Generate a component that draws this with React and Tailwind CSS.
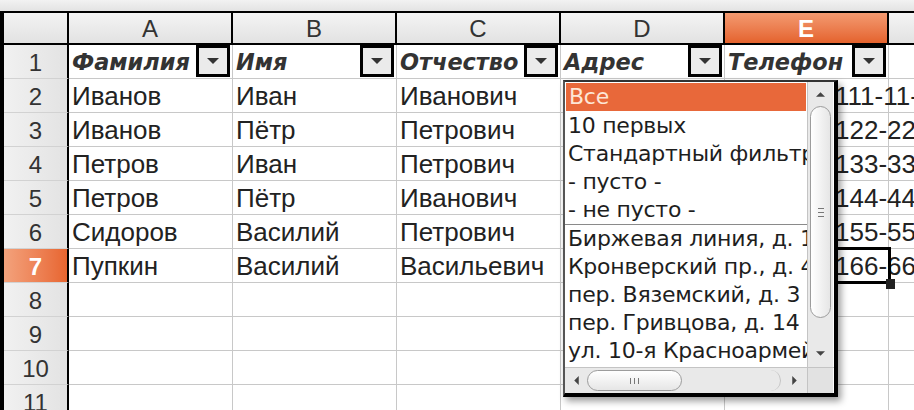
import React from 'react';

const sans = { fontFamily: "'Liberation Sans', Arial, sans-serif" };
const deja = { fontFamily: "'DejaVu Sans', Verdana, sans-serif" };

const columns = ['A', 'B', 'C', 'D', 'E'];
const titles = ['Фамилия', 'Имя', 'Отчество', 'Адрес', 'Телефон'];

const data = [
  ['Иванов', 'Иван', 'Иванович', 'Биржевая линия, д. 1', '111-11-11'],
  ['Иванов', 'Пётр', 'Петрович', 'Кронверский пр., д. 4', '122-22-22'],
  ['Петров', 'Иван', 'Петрович', 'пер. Вяземский, д. 3', '133-33-33'],
  ['Петров', 'Пётр', 'Иванович', 'пер. Гривцова, д. 14', '144-44-44'],
  ['Сидоров', 'Василий', 'Петрович', 'ул. 10-я Красноармейская', '155-55-55'],
  ['Пупкин', 'Василий', 'Васильевич', 'ул. Садовая, д. 11', '166-66-66'],
];

const listTop = ['Все', '10 первых', 'Стандартный фильтр', '- пусто -', '- не пусто -'];
const listValues = [
  'Биржевая линия, д. 1',
  'Кронверский пр., д. 4',
  'пер. Вяземский, д. 3',
  'пер. Гривцова, д. 14',
  'ул. 10-я Красноармейская',
  'ул. Садовая, д. 11',
];

const Tri = ({ dir = 'down', className = '' }) => {
  const pts = {
    down: '0,0 10,0 5,5',
    up: '0,5 10,5 5,0',
    left: '5,0 5,10 0,5',
    right: '0,0 0,10 5,5',
  }[dir];
  const vb = dir === 'left' || dir === 'right' ? '0 0 5 10' : '0 0 10 5';
  return (
    <svg viewBox={vb} className={className}>
      <polygon points={pts} fill="currentColor" />
    </svg>
  );
};

const FilterButton = () => (
  <div className="shrink-0 self-start w-[34px] h-[32px] mr-[2px] border-[3px] border-black bg-[#ebebeb] flex items-center justify-center text-[#333]">
    <Tri dir="down" className="w-[12px] h-[6px]" />
  </div>
);

const RowHead = ({ n, active }) => (
  <div
    className={`w-[65px] shrink-0 border-r-2 border-r-black border-b border-b-[#d2d2d2] flex items-center justify-center pt-[3px] text-[24px] ${
      active
        ? 'bg-gradient-to-r from-[#f3a27c] to-[#e7652f] text-white font-bold'
        : 'bg-gradient-to-r from-[#f1f1f1] to-[#e3e3e3] text-[#333]'
    }`}
  >
    {n}
  </div>
);

export default function App() {
  return (
    <div className="w-[914px] h-[410px] overflow-hidden relative bg-white" style={sans}>
      <div className="h-[11px] bg-gradient-to-b from-[#f2f2f2] to-[#e3e3e3]" />

      <div className="border-t-2 border-l-4 border-black flex flex-col">
        {/* column letters */}
        <div className="flex h-[32px] border-b-2 border-black">
          <div className="w-[65px] shrink-0 border-r-2 border-black bg-gradient-to-b from-[#f3f3f3] to-[#e2e2e2]" />
          {[...columns, ''].map((c, i) => (
            <div
              key={i}
              className={`w-[164px] shrink-0 border-r-2 border-black flex items-center justify-center pt-[2px] text-[24px] ${
                c === 'E'
                  ? 'bg-gradient-to-b from-[#f39a70] to-[#e4622c] text-white font-bold'
                  : 'bg-gradient-to-b from-[#f4f4f4] to-[#e2e2e2] text-[#333]'
              }`}
            >
              {c}
            </div>
          ))}
        </div>

        {/* row 1: titles with filter buttons */}
        <div className="flex h-[34px]">
          <RowHead n={1} />
          {titles.map((t) => (
            <div key={t} className="w-[164px] shrink-0 border-r border-b border-[#c8c8c8] flex items-center">
              <span
                className="flex-1 overflow-hidden whitespace-nowrap pl-[3px] pt-[3px] text-[22.4px] font-bold italic text-[#333]"
                style={deja}
              >
                {t}
              </span>
              <FilterButton />
            </div>
          ))}
          <div className="w-[164px] shrink-0 border-r border-b border-[#c8c8c8]" />
        </div>

        {/* data rows */}
        {Array.from({ length: 10 }).map((_, r) => {
          const row = data[r];
          return (
            <div key={r} className="flex h-[34px]">
              <RowHead n={r + 2} active={r === 5} />
              {columns.map((c, ci) => (
                <div
                  key={c}
                  className={`w-[164px] shrink-0 border-r border-b border-[#c8c8c8] flex items-center pt-[2px] whitespace-nowrap text-[26px] text-[#222] ${
                    ci === 4 ? 'overflow-visible pl-[110px]' : 'overflow-hidden pl-[3px]'
                  }`}
                >
                  {row ? row[ci] : ''}
                </div>
              ))}
              <div className="w-[164px] shrink-0 border-r border-b border-[#c8c8c8]" />
            </div>
          );
        })}
      </div>

      {/* selected cell E7 */}
      <div className="absolute left-[724px] top-[247px] w-[167px] h-[37px] border-[3px] border-black" />
      <div className="absolute left-[886px] top-[279px] w-[9px] h-[10px] bg-[#222]" />

      {/* autofilter popup */}
      <div
        className="absolute left-[563px] top-[80px] w-[275px] h-[317px] bg-white border-l-2 border-t-2 border-l-[#555] border-t-[#333] border-r-4 border-b-4 border-r-black border-b-black shadow-[3px_4px_7px_rgba(0,0,0,0.4)] flex flex-col"
        style={deja}
      >
        <div className="flex h-[285px]">
          <div className="w-[242px] overflow-hidden text-[22px] tracking-[-0.25px] text-[#1e1e1e]">
            {listTop.map((t, i) => (
              <div
                key={t}
                className={`h-[28px] leading-[28px] pl-[3px] whitespace-nowrap ${
                  i === 0 ? 'bg-[#e8683a] text-[#fde6d6] mx-[1px] mt-[1px] h-[26px] leading-[26px] mb-[1px]' : ''
                } ${i === 4 ? 'border-b border-[#8a8a8a] h-[29px]' : ''}`}
              >
                {t}
              </div>
            ))}
            {listValues.map((t) => (
              <div key={t} className="h-[28px] leading-[28px] pl-[3px] whitespace-nowrap">
                {t}
              </div>
            ))}
          </div>

          {/* vertical scrollbar */}
          <div className="w-[26px] flex flex-col bg-[#e9e9e9] border-l border-[#c4c4c4]">
            <div className="h-[24px] flex items-center justify-center text-[#444]">
              <Tri dir="up" className="w-[9px] h-[5px]" />
            </div>
            <div className="h-[212px] mx-[2px] rounded-full border border-[#9c9c9c] bg-gradient-to-r from-white to-[#e6e6e6] flex flex-col items-center justify-center gap-[3px]">
              <div className="w-[6px] h-px bg-[#777]" />
              <div className="w-[6px] h-px bg-[#777]" />
              <div className="w-[6px] h-px bg-[#777]" />
            </div>
            <div className="flex-1" />
            <div className="h-[26px] pb-[2px] flex items-center justify-center text-[#444]">
              <Tri dir="down" className="w-[9px] h-[5px]" />
            </div>
          </div>
        </div>

        <div className="flex h-[26px] border-t border-[#c4c4c4]">
          {/* horizontal scrollbar */}
          <div className="w-[242px] flex items-center bg-[#e9e9e9]">
            <div className="w-[22px] flex items-center justify-center text-[#444]">
              <Tri dir="left" className="w-[5px] h-[9px]" />
            </div>
            <div className="w-[95px] h-[21px] rounded-full border border-[#9c9c9c] bg-gradient-to-b from-white to-[#e6e6e6] flex items-center justify-center gap-[3px]">
              <div className="w-px h-[6px] bg-[#777]" />
              <div className="w-px h-[6px] bg-[#777]" />
              <div className="w-px h-[6px] bg-[#777]" />
            </div>
            <div className="flex-1 h-[21px] rounded-r-full border-r border-[#c4c4c4]" />
            <div className="w-[26px] flex items-center justify-center text-[#444]">
              <Tri dir="right" className="w-[5px] h-[9px]" />
            </div>
          </div>
          <div className="w-[26px] bg-[#e2e2e2] border-l border-[#c4c4c4]" />
        </div>
      </div>
    </div>
  );
}
